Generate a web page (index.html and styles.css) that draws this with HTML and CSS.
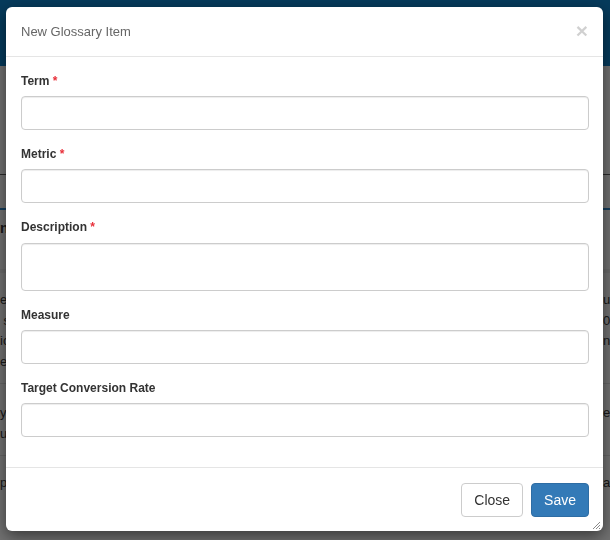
FILE: index.html
```html
<!DOCTYPE html>
<html lang="en">
<head>
<meta charset="utf-8">
<title>New Glossary Item</title>
<link rel="stylesheet" href="styles.css">
</head>
<body>
<div class="page">
  <header class="topbar"></header>
  <div class="subhead"></div>
  <div class="tabs"></div>
  <div class="grid">
    <div class="grid-row grid-head">
      <div class="cell-a"><b>n</b></div>
      <div class="cell-b"></div>
    </div>
    <div class="grid-row row-1">
      <div class="cell-a">
        <div class="line">each glossary term</div>
        <div class="line">&nbsp;some definition</div>
        <div class="line">icon usage</div>
        <div class="line">event rate</div>
      </div>
      <div class="cell-b">
        <div class="line">u</div>
        <div class="line">0</div>
        <div class="line">n</div>
      </div>
    </div>
    <div class="grid-row row-2">
      <div class="cell-a">
        <div class="line">y metric</div>
        <div class="line">u value</div>
      </div>
      <div class="cell-b">
        <div class="line">eg</div>
      </div>
    </div>
    <div class="grid-row row-3">
      <div class="cell-a">
        <div class="line">p</div>
      </div>
      <div class="cell-b">
        <div class="line">a</div>
      </div>
    </div>
  </div>
</div>

<div class="backdrop"></div>

<div class="modal" role="dialog" aria-labelledby="modal-title">
  <div class="modal-header">
    <h4 class="modal-title" id="modal-title">New Glossary Item</h4>
    <button type="button" class="close" aria-label="Close">×</button>
  </div>
  <form class="modal-body">
    <div class="form-group">
      <label class="label" for="term">Term <span class="req">*</span></label>
      <input class="control" id="term" type="text">
    </div>
    <div class="form-group">
      <label class="label" for="metric">Metric <span class="req">*</span></label>
      <input class="control" id="metric" type="text">
    </div>
    <div class="form-group">
      <label class="label label-tall" for="description">Description <span class="req">*</span></label>
      <textarea class="control textarea" id="description"></textarea>
    </div>
    <div class="form-group">
      <label class="label" for="measure">Measure</label>
      <input class="control" id="measure" type="text">
    </div>
    <div class="form-group">
      <label class="label" for="rate">Target Conversion Rate</label>
      <input class="control" id="rate" type="text">
    </div>
  </form>
  <div class="modal-footer">
    <button type="button" class="btn btn-default">Close</button>
    <button type="button" class="btn btn-primary">Save</button>
  </div>
  <svg class="grip" width="9" height="9" viewBox="0 0 9 9" aria-hidden="true">
    <path d="M8 1 L1 8 M8 4 L4 8 M8 7 L7 8" stroke="#8a8a8a" stroke-width="1" fill="none"/>
  </svg>
</div>
</body>
</html>
```

FILE: styles.css
```css
* {
  box-sizing: border-box;
}

html, body {
  margin: 0;
  padding: 0;
  height: 540px;
  overflow: hidden;
}

body {
  font-family: "Liberation Sans", Arial, Helvetica, sans-serif;
  font-size: 13px;
  color: #333;
  background: #e2e2e2;
}

/* ---------- page behind the dialog ---------- */
.page {
  width: 100%;
}

.topbar {
  height: 66px;
  background: #0b75b7;
}

.subhead {
  height: 109px;
  border-bottom: 1px solid #555;
}

.tabs {
  height: 35px;
  border-bottom: 2px solid #2a7ab8;
}

.grid-row {
  display: flex;
}

.cell-a {
  width: 603px;
  flex: none;
  white-space: nowrap;
  overflow: hidden;
}

.cell-b {
  flex: 1;
  white-space: nowrap;
  overflow: hidden;
}

.grid-head {
  height: 63px;
  padding-top: 10px;
  border-bottom: 4px solid #d4d4d4;
  font-size: 14px;
}

.line {
  line-height: 20.5px;
}

.row-1 {
  height: 111px;
  padding-top: 17px;
  border-bottom: 1px solid #c8c8c8;
}

.row-2 {
  height: 72px;
  padding-top: 19px;
  border-bottom: 1px solid #c8c8c8;
}

.row-3 {
  padding-top: 17px;
}

.backdrop {
  position: fixed;
  inset: 0;
  background: rgba(0, 0, 0, 0.5);
}

/* ---------- modal ---------- */
.modal {
  position: fixed;
  top: 7px;
  left: 6px;
  width: 597px;
  height: 524px;
  background: #fff;
  border-radius: 6px;
  box-shadow: 0 5px 15px rgba(0, 0, 0, 0.5);
  display: flex;
  flex-direction: column;
}

.modal-header {
  display: flex;
  align-items: center;
  justify-content: space-between;
  padding: 15px 15px;
  height: 50px;
  border-bottom: 1px solid #e5e5e5;
}

.modal-title {
  margin: 0;
  font-size: 13px;
  font-weight: normal;
  line-height: 19px;
  color: #666;
}

.close {
  border: 0;
  background: none;
  padding: 0;
  margin: -3px 0 0;
  font-family: "Liberation Sans", Arial, sans-serif;
  font-size: 21px;
  font-weight: bold;
  line-height: 1;
  color: #000;
  opacity: 0.18;
  cursor: pointer;
}

.modal-body {
  margin: 0;
  padding: 15px 14px 0 15px;
  flex: 1;
}

.form-group {
  margin-bottom: 15px;
  display: flex;
  flex-direction: column;
}

.label {
  display: block;
  font-size: 12px;
  font-weight: bold;
  line-height: 18px;
  margin-bottom: 6px;
  color: #333;
}

.label-tall {
  margin-bottom: 7px;
}

.req {
  color: #e8303a;
}

.control {
  display: block;
  width: 100%;
  height: 34px;
  padding: 6px 12px;
  font-family: inherit;
  font-size: 14px;
  color: #555;
  background: #fff;
  border: 1px solid #ccc;
  border-radius: 4px;
  box-shadow: inset 0 1px 1px rgba(0, 0, 0, 0.075);
  margin: 0;
}

.textarea {
  height: 48px;
  resize: none;
}

.modal-footer {
  display: flex;
  justify-content: flex-end;
  gap: 8px;
  padding: 15px 14px 14px 15px;
  border-top: 1px solid #e5e5e5;
}

.btn {
  height: 34px;
  padding: 6px 12px;
  font-family: "Liberation Sans", Arial, sans-serif;
  font-size: 14px;
  line-height: 20px;
  border-radius: 4px;
  border: 1px solid transparent;
  cursor: pointer;
}

.btn-default {
  color: #333;
  background: #fff;
  border-color: #ccc;
}

.btn-primary {
  color: #fff;
  background: #337ab7;
  border-color: #2e6da4;
}

.grip {
  position: absolute;
  right: 2px;
  bottom: 1px;
}
```
